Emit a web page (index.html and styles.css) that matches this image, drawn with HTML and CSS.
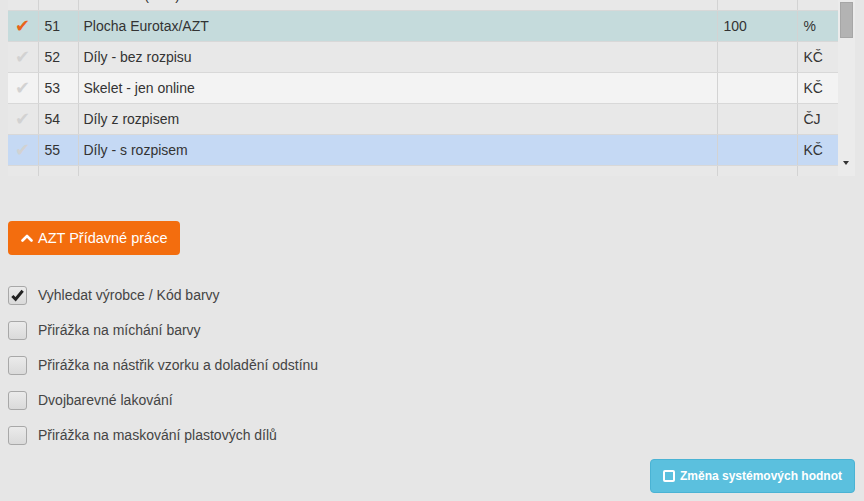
FILE: index.html
```html
<!DOCTYPE html>
<html>
<head>
<meta charset="utf-8">
<link rel="stylesheet" href="styles.css">
</head>
<body>
<div class="page">
  <div class="grid-wrap">
    <div class="grid-viewport">
      <table class="grid">
        <colgroup>
          <col class="c-chk"><col class="c-num"><col class="c-name"><col class="c-val"><col class="c-unit">
        </colgroup>
        <tr class="row r-alt"><td class="chk"><span class="tick off">✔</span></td><td class="num">50</td><td>Lakování (AZT)</td><td class="num"></td><td class="num">KČ</td></tr>
        <tr class="row r-sel"><td class="chk"><span class="tick on">✔</span></td><td class="num">51</td><td>Plocha Eurotax/AZT</td><td class="num">100</td><td class="num">%</td></tr>
        <tr class="row r-alt"><td class="chk"><span class="tick off">✔</span></td><td class="num">52</td><td>Díly - bez rozpisu</td><td class="num"></td><td class="num">KČ</td></tr>
        <tr class="row r-light"><td class="chk"><span class="tick off">✔</span></td><td class="num">53</td><td>Skelet - jen online</td><td class="num"></td><td class="num">KČ</td></tr>
        <tr class="row r-alt"><td class="chk"><span class="tick off">✔</span></td><td class="num">54</td><td>Díly z rozpisem</td><td class="num"></td><td class="num">ČJ</td></tr>
        <tr class="row r-hover"><td class="chk"><span class="tick off">✔</span></td><td class="num">55</td><td>Díly - s rozpisem</td><td class="num"></td><td class="num">KČ</td></tr>
        <tr class="row r-empty"><td></td><td></td><td></td><td></td><td></td></tr>
      </table>
    </div>
    <div class="scrollbar">
      <div class="thumb"></div>
      <div class="arrow"></div>
    </div>
  </div>

  <button class="btn-orange"><svg class="chev" viewBox="0 0 12 8" width="12" height="8"><path d="M1.5 6.5 L6 2 L10.5 6.5" fill="none" stroke="#fff" stroke-width="2.6" stroke-linecap="round" stroke-linejoin="round"/></svg>AZT Přídavné práce</button>

  <ul class="options">
    <li class="opt"><span class="box checked"><svg viewBox="0 0 16 16" width="15" height="15"><path d="M2.5 8.5 L6 12 L13.5 3" fill="none" stroke="#222" stroke-width="3.2" stroke-linejoin="miter"/></svg></span><span class="lbl">Vyhledat výrobce / Kód barvy</span></li>
    <li class="opt"><span class="box"></span><span class="lbl">Přirážka na míchání barvy</span></li>
    <li class="opt"><span class="box"></span><span class="lbl">Přirážka na nástřik vzorku a doladění odstínu</span></li>
    <li class="opt"><span class="box"></span><span class="lbl">Dvojbarevné lakování</span></li>
    <li class="opt"><span class="box"></span><span class="lbl">Přirážka na maskování plastových dílů</span></li>
  </ul>

  <div class="footer">
    <button class="btn-info"><span class="sq"></span>Změna systémových hodnot</button>
  </div>
</div>
</body>
</html>
```

FILE: styles.css
```css
html, body {
  margin: 0;
  padding: 0;
  background: #e6e6e6;
  font-family: "Liberation Sans", Arial, sans-serif;
  color: #333;
}
.page {
  width: 864px;
  height: 501px;
  overflow: hidden;
  padding: 0 9px 0 8px;
  box-sizing: border-box;
}
.grid-wrap {
  display: flex;
  height: 176px;
}
.grid-viewport {
  width: 830px;
  height: 176px;
  overflow: hidden;
  background: #e8e8e8;
}
.grid {
  width: 830px;
  border-collapse: collapse;
  table-layout: fixed;
  margin-top: -20px;
  font-size: 14px;
}
.c-chk { width: 30px; }
.c-num { width: 40px; }
.c-name { width: 639px; }
.c-val { width: 80px; }
.c-unit { width: 41px; }
.grid td {
  height: 30px;
  padding: 0 5px;
  border-left: 1px solid #d3d3d3;
  border-bottom: 1px solid #d8d8d8;
  white-space: nowrap;
  overflow: hidden;
  vertical-align: middle;
  color: #333;
}
.grid td.num { padding-left: 6px; }
.grid td:first-child { border-left: none; }
.grid td.chk { text-align: center; padding: 0; }
.r-sel td { background: #c5dbdc; }
.r-alt td { background: #e8e8e8; }
.r-light td { background: #f3f3f3; }
.r-hover td { background: #c5d9f4; }
.r-empty td { background: #e8e8e8; border-bottom: none; }
.tick { font-size: 18px; line-height: 1; }
.tick.on { color: #e8641a; }
.tick.off { color: #d2d2d2; }
.scrollbar {
  width: 17px;
  height: 176px;
  background: #ebebeb;
  position: relative;
}
.thumb {
  margin: 2px 2px 0 2px;
  height: 36px;
  background: #b3b3b3;
  border: 1px solid #a6a6a6;
  box-sizing: border-box;
}
.arrow {
  position: absolute;
  left: 5px;
  top: 161px;
  width: 0;
  height: 0;
  border-left: 3.5px solid transparent;
  border-right: 3.5px solid transparent;
  border-top: 4px solid #333;
}
.btn-orange {
  margin-top: 45px;
  height: 34px;
  width: 172px;
  background: #f36d0e;
  color: #fff;
  border: none;
  border-radius: 4px;
  font-family: "Liberation Sans", Arial, sans-serif;
  font-size: 14.5px;
  display: flex;
  align-items: center;
  padding: 0 0 0 13px;
  gap: 5px;
  cursor: pointer;
}
.chev { margin-top: -1px; }
.options {
  list-style: none;
  margin: 30px 0 0 0;
  padding: 0;
  display: flex;
  flex-direction: column;
  gap: 15px;
}
.opt {
  display: flex;
  align-items: center;
  height: 20px;
  gap: 11px;
  font-size: 14px;
  color: #444;
}
.box {
  width: 19px;
  height: 19px;
  border: 1px solid #a8a8a8;
  border-radius: 3px;
  background: linear-gradient(#ebebeb, #dadada);
  box-sizing: border-box;
  display: flex;
  align-items: center;
  justify-content: center;
}
.footer {
  display: flex;
  justify-content: flex-end;
  margin-top: 14px;
}
.btn-info {
  height: 34px;
  width: 205px;
  background: #5bc0de;
  border: 1px solid #4ab3d4;
  border-radius: 4px;
  color: #fff;
  font-family: "Liberation Sans", Arial, sans-serif;
  font-size: 12px;
  font-weight: bold;
  display: flex;
  align-items: center;
  justify-content: center;
  gap: 5px;
  padding: 0;
}
.sq {
  width: 8px;
  height: 8px;
  border: 2px solid #fff;
  border-radius: 2px;
}
```
